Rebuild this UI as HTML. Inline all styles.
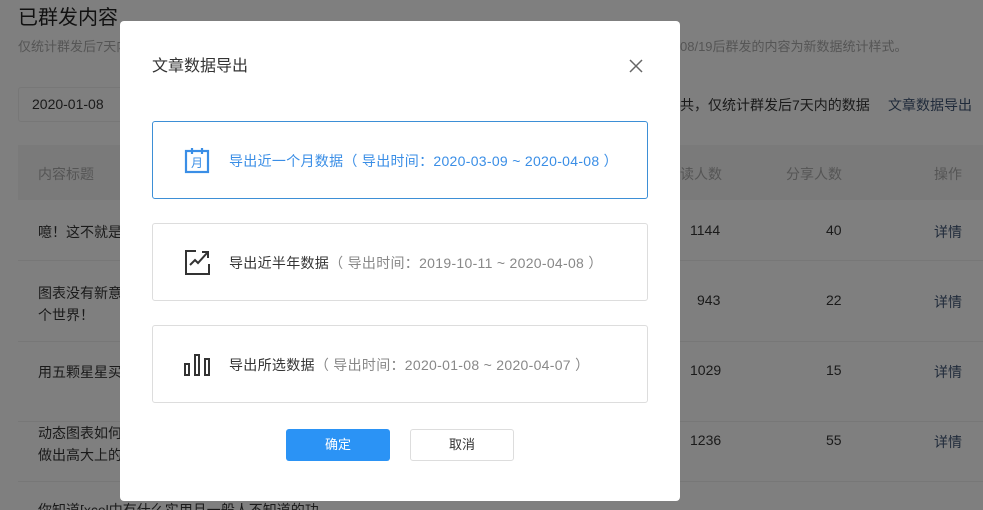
<!DOCTYPE html>
<html><head><meta charset="utf-8"><style>
*{margin:0;padding:0;box-sizing:border-box}
html,body{width:983px;height:510px;overflow:hidden}
body{background:#7f7f7f;font-family:"Liberation Sans","Noto Sans CJK SC",sans-serif;position:relative;color:#1a1a1a}
.a{position:absolute;white-space:nowrap}
.opt{position:absolute;left:152px;width:496px;height:78px;border:1px solid #ddd;border-radius:3px;background:#fff}
.opt .t{position:absolute;left:76px;top:29px;font-size:14px;color:#333;letter-spacing:0.3px}
.opt .t span{color:#888}
.opt svg{position:absolute;left:30px;top:24px}
</style></head><body>
<div class="a" style="left:18px;top:1px;font-size:20px;color:#111">已群发内容</div>
<div class="a" style="left:18px;top:36px;font-size:13px;color:#555">仅统计群发后7天内的数据</div>
<div class="a" style="left:680px;top:36px;font-size:13px;color:#555">08/19后群发的内容为新数据统计样式。</div>
<div class="a" style="left:18px;top:87px;width:110px;height:35px;border:1px solid #777;border-radius:3px;padding:8px 13px;font-size:14px;color:#1a1a1a">2020-01-08</div>
<div class="a" style="left:680px;top:95px;font-size:14px;color:#1a1a1a">共，仅统计群发后7天内的数据</div>
<div class="a" style="left:888px;top:95px;font-size:14px;color:#1f2a3a">文章数据导出</div>
<div class="a" style="left:18px;top:145px;width:965px;height:55px;background:#7a7a7a"></div>
<div class="a" style="left:38px;top:164px;font-size:14px;color:#555">内容标题</div>
<div class="a" style="left:680px;top:164px;font-size:14px;color:#555">读人数</div>
<div class="a" style="left:786px;top:164px;font-size:14px;color:#555">分享人数</div>
<div class="a" style="left:934px;top:164px;font-size:14px;color:#555">操作</div>
<div class="a" style="left:18px;top:260px;width:965px;height:1px;background:#777"></div>
<div class="a" style="left:18px;top:341px;width:965px;height:1px;background:#777"></div>
<div class="a" style="left:18px;top:421px;width:965px;height:1px;background:#777"></div>
<div class="a" style="left:18px;top:481px;width:965px;height:1px;background:#777"></div>
<div class="a" style="left:38px;top:222px;font-size:14px">噫！这不就是</div>
<div class="a" style="left:38px;top:282px;font-size:14px;line-height:22px">图表没有新意<br>个世界！</div>
<div class="a" style="left:38px;top:362px;font-size:14px">用五颗星星买</div>
<div class="a" style="left:38px;top:422px;font-size:14px;line-height:22px">动态图表如何<br>做出高大上的</div>
<div class="a" style="left:38px;top:500px;font-size:14px">你知道[xcel中有什么实用且一般人不知道的功</div>
<div class="a" style="left:690px;top:222px;font-size:14px">1144</div><div class="a" style="left:826px;top:222px;font-size:14px">40</div><div class="a" style="left:934px;top:222px;font-size:14px;color:#1f2a3a">详情</div>
<div class="a" style="left:697px;top:292px;font-size:14px">943</div><div class="a" style="left:826px;top:292px;font-size:14px">22</div><div class="a" style="left:934px;top:292px;font-size:14px;color:#1f2a3a">详情</div>
<div class="a" style="left:690px;top:362px;font-size:14px">1029</div><div class="a" style="left:826px;top:362px;font-size:14px">15</div><div class="a" style="left:934px;top:362px;font-size:14px;color:#1f2a3a">详情</div>
<div class="a" style="left:690px;top:432px;font-size:14px">1236</div><div class="a" style="left:826px;top:432px;font-size:14px">55</div><div class="a" style="left:934px;top:432px;font-size:14px;color:#1f2a3a">详情</div>

<div class="a" style="left:120px;top:21px;width:560px;height:480px;background:#fff;border-radius:4px"></div>
<div class="a" style="left:152px;top:52px;font-size:16px;color:#333">文章数据导出</div>
<svg class="a" style="left:628px;top:58px" width="16" height="16" viewBox="0 0 16 16"><path d="M2 2L14 14M14 2L2 14" stroke="#666" stroke-width="1.5"/></svg>

<div class="opt" style="top:121px;border-color:#3d8fd6">
<svg width="28" height="28" viewBox="0 0 28 28"><rect x="3" y="5" width="22" height="21" fill="none" stroke="#3a8ee6" stroke-width="2.2"/><path d="M9 2v6M19 2v6" stroke="#3a8ee6" stroke-width="2.2"/><text x="14" y="21" font-size="12" fill="#3a8ee6" text-anchor="middle" font-family="Noto Sans CJK SC">月</text></svg>
<div class="t" style="color:#3a8ee6">导出近一个月数据（ 导出时间：2020-03-09 ~ 2020-04-08 ）</div></div>
<div class="opt" style="top:223px">
<svg width="28" height="28" viewBox="0 0 28 28"><path d="M13 3H3v23h23V16" fill="none" stroke="#333" stroke-width="2"/><path d="M7 17l5-5 3 3 9-10M19 4h6v6" fill="none" stroke="#333" stroke-width="2"/></svg>
<div class="t">导出近半年数据<span>（ 导出时间：2019-10-11 ~ 2020-04-08 ）</span></div></div>
<div class="opt" style="top:325px">
<svg width="28" height="28" viewBox="0 0 28 28"><rect x="2" y="14" width="4" height="11" fill="none" stroke="#333" stroke-width="2"/><rect x="12" y="5" width="4" height="20" fill="none" stroke="#333" stroke-width="2"/><rect x="22" y="9" width="4" height="16" fill="none" stroke="#333" stroke-width="2"/></svg>
<div class="t">导出所选数据<span>（ 导出时间：2020-01-08 ~ 2020-04-07 ）</span></div></div>

<div class="a" style="left:286px;top:429px;width:104px;height:32px;background:#2b93f5;border-radius:3px;color:#fff;font-size:13px;text-align:center;line-height:32px">确定</div>
<div class="a" style="left:410px;top:429px;width:104px;height:32px;border:1px solid #ddd;border-radius:3px;color:#333;font-size:13px;text-align:center;line-height:30px">取消</div>
</body></html>
